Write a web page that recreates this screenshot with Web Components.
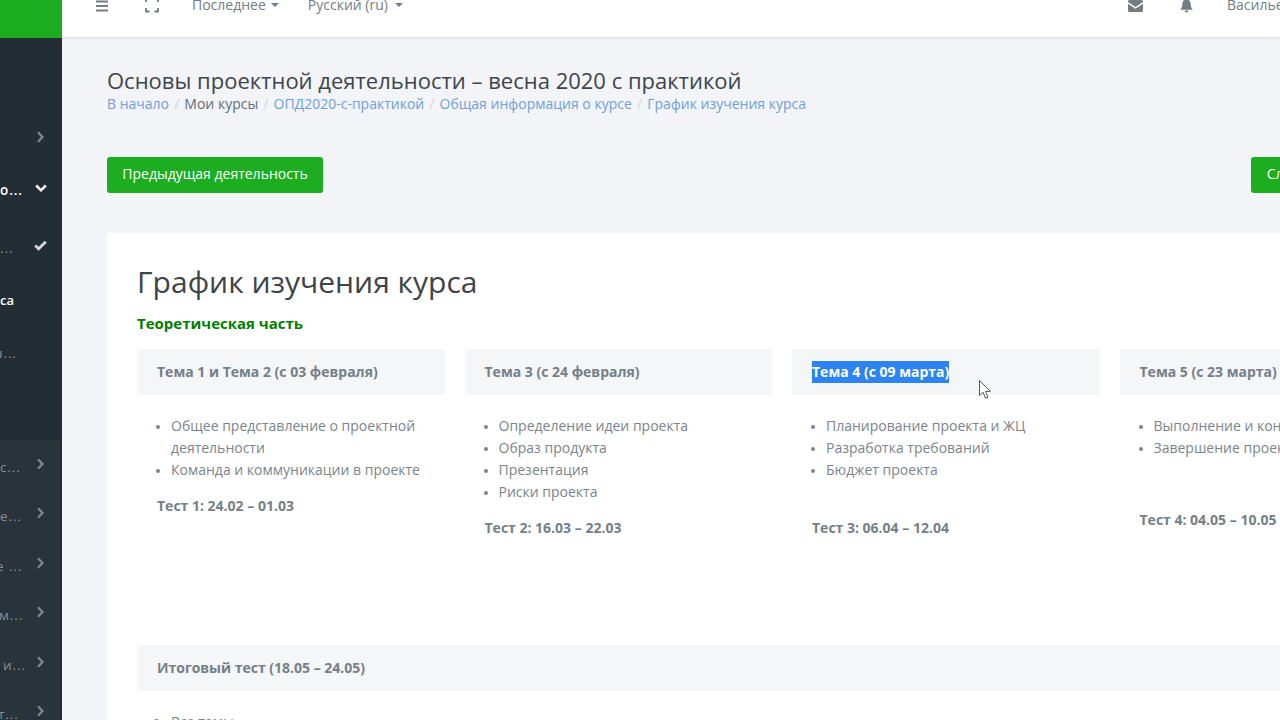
<!DOCTYPE html>
<html lang="ru"><head><meta charset="utf-8"><title>График изучения курса</title>
<style>
html,body{margin:0;padding:0;height:720px;width:1280px;overflow:hidden;background:#f2f4f7;font-family:"Open Sans",sans-serif}
</style></head><body>
<app-shell>
  <side-nav slot="side"></side-nav>
  <top-bar></top-bar>
  <page-head></page-head>
  <nav-buttons></nav-buttons>
  <content-card>
    <h-title>График изучения курса</h-title>
    <sub-title>Теоретическая часть</sub-title>
    <topic-row>
      <topic-card title="Тема 1 и Тема 2 (с 03 февраля)" test="Тест 1: 24.02 – 01.03" items="Общее представление о проектной деятельности|Команда и коммуникации в проекте"></topic-card>
      <topic-card title="Тема 3 (с 24 февраля)" test="Тест 2: 16.03 – 22.03" items="Определение идеи проекта|Образ продукта|Презентация|Риски проекта"></topic-card>
      <topic-card selected title="Тема 4 (с 09 марта)" test="Тест 3: 06.04 – 12.04" testgap="37" items="Планирование проекта и ЖЦ|Разработка требований|Бюджет проекта"></topic-card>
      <topic-card title="Тема 5 (с 23 марта)" test="Тест 4: 04.05 – 10.05" testgap="51" items="Выполнение и кон|Завершение проек"></topic-card>
    </topic-row>
    <final-block title="Итоговый тест (18.05 – 24.05)" text="Все темы"></final-block>
  </content-card>
</app-shell>
<mouse-cursor></mouse-cursor>
<script>
const def=(n,html)=>customElements.define(n,class extends HTMLElement{
  constructor(){super();this.attachShadow({mode:'open'})}
  connectedCallback(){this.shadowRoot.innerHTML=typeof html==='function'?html(this):html}
});
const chev=`<svg width="9" height="12" viewBox="0 0 9 12"><path d="M2 1.200 6.500 6 2 10.800" fill="none" stroke="currentColor" stroke-width="2.300"/></svg>`;
const row=(t,h,ml,cls,ic)=>`<div class="row ${cls||''}" style="height:${h}px"><span class="t" style="margin-left:${ml}px">${t}</span><span class="i">${ic||''}</span></div>`;
def('app-shell',`<style>
:host{display:flex;width:1280px;height:720px;overflow:hidden}
.main{flex:1;min-width:0;display:flex;flex-direction:column;overflow:hidden}
</style><slot name="side"></slot><div class="main"><slot></slot></div>`);
def('side-nav',()=>`<style>
:host{display:block;width:62px;height:720px;flex:none;overflow:hidden;background:#28333b;color:#868e94;font-size:13.500px}
.logo{height:38px;background:#1cad21}
.sec{box-sizing:border-box;overflow:hidden}
.up{background:#232d35;padding-top:77px;height:402px}
.low{background:#28333b;padding-top:2.300px;height:280px;border-right:2px solid #222c33}
.row{display:flex;align-items:center;justify-content:space-between;padding-right:15px;overflow:hidden}
.low .row{padding-right:13px}
.t{white-space:nowrap;letter-spacing:.9px}
.i{width:13px;display:flex;justify-content:center;color:#7f878d;transform:translateY(-3px);flex:none}
.w{color:#fff;font-weight:600}.w .i{color:#fff;transform:translateY(-2px)}
.a{color:#fff;font-weight:600;font-size:13px}.a .t{letter-spacing:0;margin-left:-1px}
</style>
<div class="logo"></div>
<div class="sec up">
${row('',50,0,'',chev)}
${row('о...',50,0,'w',`<svg width="12" height="9" viewBox="0 0 12 9"><path d="M1.200 1.500 6 6.300l4.800-4.800" fill="none" stroke="currentColor" stroke-width="2.500"/></svg>`)}
${row('т...',66,-7,'',`<svg width="14" height="11" viewBox="0 0 14 11"><path d="M1.300 5.500 5 9 12.700 1.500" fill="none" stroke="#d5d8da" stroke-width="3"/></svg>`)}
${row('са',38,0,'a','')}
${row('н...',68,-6,'','')}
</div>
<div class="sec low">
${row('с...',49.400,0,'',chev)}
${row('е...',49.400,0,'',chev)}
${row('е ...',49.400,-4,'',chev)}
${row('м...',49.400,-1,'',chev)}
${row('и...',49.400,3,'',chev)}
${row('т...',49.400,-2,'',chev)}
</div>`);
def('top-bar',`<style>
:host{display:flex;flex:none;height:37px;background:#fff;box-shadow:0 2px 2px rgba(0,0,0,.07);position:relative;align-items:flex-start;color:#737d85;font-size:14px;overflow:visible}
.clip{display:flex;flex:1;min-width:0;height:37px;overflow:hidden;align-items:flex-start}
.b{margin-top:-5.500px;height:20px;display:flex;align-items:center;white-space:nowrap;flex:none}
.ic{margin-top:-5px}
.d{margin-top:-4px}
.c{width:0;height:0;border:4px solid transparent;border-top-color:#737d85;border-bottom:0;margin-left:5px}
svg{display:block}
</style><div class="clip">
<span class="b d" style="margin-left:34px"><svg width="12" height="12" viewBox="0 0 12 12"><path d="M0 1.500h12M0 6h12M0 10.500h12" stroke="#737d85" stroke-width="2"/></svg></span>
<span class="b ic" style="margin-left:37px"><svg width="14" height="16" viewBox="0 0 14 16"><path d="M1 5V1.500h3.500M9.500 1.500H13V5M1 11v3.500h3.500M9.500 14.500H13V11" fill="none" stroke="#737d85" stroke-width="1.800"/></svg></span>
<span class="b" style="margin-left:33px">Последнее<i class="c"></i></span>
<span class="b" style="margin-left:29px">Русский (ru)<i class="c" style="margin-left:7px"></i></span>
<span class="b d" style="margin-left:auto"><svg width="15" height="12" viewBox="0 0 15 12"><path d="M1.500 0h12A1.500 1.500 0 0 1 15 1.500v.6L7.500 7 0 2.100v-.6A1.500 1.500 0 0 1 1.500 0Z M0 3.800l7.500 4.900L15 3.800v6.700A1.500 1.500 0 0 1 13.500 12h-12A1.500 1.500 0 0 1 0 10.500Z" fill="#737d85"/></svg></span>
<span class="b ic" style="margin-left:37px"><svg width="13" height="15" viewBox="0 0 14 15"><path d="M7 0a1 1 0 0 1 1 1.200C10.300 1.700 11.500 3.500 11.500 6c0 3 .7 4.500 2.300 6H.2C1.800 10.500 2.500 9 2.500 6 2.500 3.500 3.700 1.700 6 1.200A1 1 0 0 1 7 0ZM5 13h4a2 2 0 0 1-4 0Z" fill="#737d85"/></svg></span>
<span class="b" style="margin-left:34px;width:53px;overflow:hidden">Василье</span>
</div>`);
def('page-head',`<style>
:host{display:block;flex:none;margin:30px 0 0 45px;color:#373a3c}
h1{margin:0;font-weight:400;font-size:22px;line-height:26px;white-space:nowrap;color:#3e444a}
.bc{font-size:14px;line-height:21px;white-space:nowrap;color:#626d75}
a{color:#6f9fdc;text-decoration:none}i{font-style:normal;color:#cfd4d8;margin:0 5.100px}
</style><h1>Основы проектной деятельности – весна 2020 с практикой</h1>
<div class="bc"><a>В начало</a><i>/</i>Мои курсы<i>/</i><a>ОПД2020-с-практикой</a><i>/</i><a>Общая информация о курсе</a><i>/</i><a>График изучения курса</a></div>`);
def('nav-buttons',`<style>
:host{display:flex;flex:none;margin:43px 0 0 45px;overflow:hidden}
a{flex:none;background:#1cad21;color:#fff;font-size:14px;height:36px;line-height:34.500px;padding:0 15.300px;border-radius:3px;white-space:nowrap;display:block;box-sizing:border-box}
.n{margin-left:928.400px;border-radius:3px 0 0 3px}
</style><a>Предыдущая деятельность</a><a class="n">Сл</a>`);
def('content-card',`<style>
:host{display:block;flex:none;margin:40px 0 0 45px;width:1240px;height:520px;background:#fff;box-sizing:border-box;padding:30px}
</style><slot></slot>`);
def('h-title',`<style>:host{display:block;font-size:30px;line-height:38px;color:#3e444a;white-space:nowrap}</style><slot></slot>`);
def('sub-title',`<style>:host{display:block;font-size:15px;font-weight:700;color:#008000;line-height:20px;margin-top:12px;white-space:nowrap}</style><slot></slot>`);
def('topic-row',`<style>:host{display:flex;gap:20px;margin-top:16px;height:296px}</style><slot></slot>`);
def('topic-card',h=>{
 const it=h.getAttribute('items').split('|').map(x=>`<li>${x}</li>`).join('');
 const sel=h.hasAttribute('selected');
 const title=h.getAttribute('title');
 return `<style>
:host{display:block;width:307.500px;flex:none;color:#757f87;font-size:14px}
.h{background:#f4f6f8;height:46px;line-height:46.800px;padding:0 20px;font-weight:700;white-space:nowrap}
.s{background:#2e83f2;color:#fff;display:inline-block;height:22.400px;line-height:22.400px;vertical-align:top;margin-top:12px}
ul{margin:20px 0 0;padding:0 20px 0 34px;line-height:22px;color:#7b848b}
li::marker{font-size:12px}
.t{font-weight:700;margin:${h.getAttribute('testgap')||15}px 0 0 20px;line-height:20px;white-space:nowrap}
</style><div class="h">${sel?`<span class="s">${title}</span>`:title}</div><ul>${it}</ul><div class="t">${h.getAttribute('test')}</div>`});
def('final-block',h=>`<style>
:host{display:block;color:#757f87;font-size:14px}
.h{background:#f4f6f8;height:46px;line-height:46px;padding:0 20px;font-weight:700}
ul{margin:20px 0 0;padding:0 0 0 34px;line-height:22px;color:#7b848b}
</style><div class="h">${h.getAttribute('title')}</div><ul><li>${h.getAttribute('text')}</li></ul>`);
def('mouse-cursor',`<style>:host{display:block;position:absolute;left:979px;top:380px;width:13px;height:20px}</style><svg width="13" height="20" viewBox="0 0 13 20"><path d="M.5.5v15l3.500-3.300 2.600 6 2.400-1-2.600-5.800h5Z" fill="#fff" stroke="#555" stroke-width="1"/></svg>`);
</script></body></html>
